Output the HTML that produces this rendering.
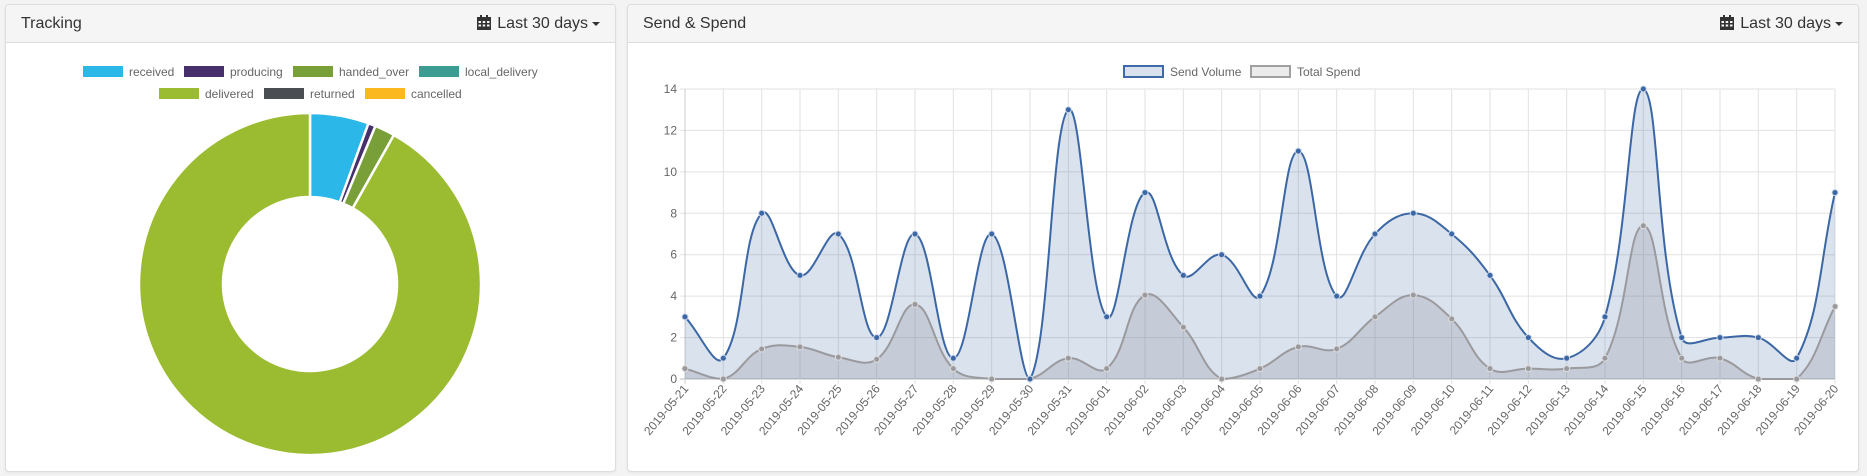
<!DOCTYPE html>
<html><head><meta charset="utf-8">
<style>
html,body{margin:0;padding:0;}
body{width:1867px;height:476px;background:#f3f3f3;font-family:"Liberation Sans",sans-serif;position:relative;overflow:hidden;}
.panel{position:absolute;top:4px;background:#fff;border:1px solid #ddd;border-radius:4px;box-shadow:0 1px 2px rgba(0,0,0,.06);}
.hd{height:37px;background:#f5f5f5;border-bottom:1px solid #ddd;border-radius:4px 4px 0 0;position:relative;}
.hd .t{position:absolute;left:15px;top:10px;font-size:16px;color:#333;}
.hd .r{position:absolute;right:15px;top:10px;font-size:16px;color:#333;}
.caret{display:inline-block;width:0;height:0;border-left:4px solid transparent;border-right:4px solid transparent;border-top:4px solid #333;vertical-align:middle;margin-left:4px;}
svg text{font-family:"Liberation Sans",sans-serif;}
</style></head><body>
<div class="panel" style="left:5px;width:609px;height:466px;">
 <div class="hd"><span class="t">Tracking</span><span class="r"><svg width="14" height="15" viewBox="0 0 14 15" style="vertical-align:-2px;margin-right:6px"><rect x="0" y="2" width="14" height="13" fill="#333"/><rect x="3" y="0" width="2" height="4" fill="#333"/><rect x="9" y="0" width="2" height="4" fill="#333"/><g fill="#f5f5f5"><rect x="1.5" y="6" width="2.5" height="2"/><rect x="5.7" y="6" width="2.5" height="2"/><rect x="10" y="6" width="2.5" height="2"/><rect x="1.5" y="9.5" width="2.5" height="2"/><rect x="5.7" y="9.5" width="2.5" height="2"/><rect x="10" y="9.5" width="2.5" height="2"/></g></svg>Last 30 days<span class="caret"></span></span></div>
</div>
<div class="panel" style="left:627px;width:1230px;height:466px;">
 <div class="hd"><span class="t">Send &amp; Spend</span><span class="r"><svg width="14" height="15" viewBox="0 0 14 15" style="vertical-align:-2px;margin-right:6px"><rect x="0" y="2" width="14" height="13" fill="#333"/><rect x="3" y="0" width="2" height="4" fill="#333"/><rect x="9" y="0" width="2" height="4" fill="#333"/><g fill="#f5f5f5"><rect x="1.5" y="6" width="2.5" height="2"/><rect x="5.7" y="6" width="2.5" height="2"/><rect x="10" y="6" width="2.5" height="2"/><rect x="1.5" y="9.5" width="2.5" height="2"/><rect x="5.7" y="9.5" width="2.5" height="2"/><rect x="10" y="9.5" width="2.5" height="2"/></g></svg>Last 30 days<span class="caret"></span></span></div>
</div>
<svg id="s" width="1867" height="476" style="position:absolute;left:0;top:0">
 <g font-size="12" fill="#666">
  <rect x="83" y="66" width="40" height="11" fill="#2bb8e8"/><text x="129" y="76">received</text>
  <rect x="184" y="66" width="40" height="11" fill="#46306c"/><text x="230" y="76">producing</text>
  <rect x="293" y="66" width="40" height="11" fill="#789f38"/><text x="339" y="76">handed_over</text>
  <rect x="419" y="66" width="40" height="11" fill="#3b9c92"/><text x="465" y="76">local_delivery</text>
  <rect x="159" y="88" width="40" height="11" fill="#9bbb30"/><text x="205" y="98">delivered</text>
  <rect x="264" y="88" width="40" height="11" fill="#4a4d52"/><text x="310" y="98">returned</text>
  <rect x="365" y="88" width="40" height="11" fill="#fbb91f"/><text x="411" y="98">cancelled</text>
  <rect x="1124" y="66" width="39" height="11" fill="#d9e1ec" stroke="#3e6aa7" stroke-width="2"/><text x="1170" y="76">Send Volume</text>
  <rect x="1251" y="66" width="39" height="11" fill="#ececec" stroke="#a0a0a0" stroke-width="2"/><text x="1297" y="76">Total Spend</text>
 </g>
 <g id="donut"></g>
 <g id="chart"></g>
</svg>
<script>
var NS="http://www.w3.org/2000/svg";
function el(p,t,a,txt){var e=document.createElementNS(NS,t);for(var k in a)e.setAttribute(k,a[k]);if(txt!=null)e.textContent=txt;p.appendChild(e);return e;}
var cx=310,cy=284,R=171,r=87,d=document.getElementById('donut');
var segs=[[0,20,'#2bb8e8'],[20,22.5,'#46306c'],[22.5,29.4,'#789f38'],[29.4,360,'#9bbb30']];
function pt(a,rad){var t=(a-90)*Math.PI/180;return [cx+rad*Math.cos(t),cy+rad*Math.sin(t)];}
segs.forEach(function(s){var a0=s[0],a1=s[1],lg=(a1-a0)>180?1:0;var p0=pt(a0,R),p1=pt(a1,R),q1=pt(a1,r),q0=pt(a0,r);
el(d,'path',{d:'M'+p0+' A'+R+' '+R+' 0 '+lg+' 1 '+p1+' L'+q1+' A'+r+' '+r+' 0 '+lg+' 0 '+q0+' Z',fill:s[2],stroke:'#fff','stroke-width':2.5});});
var g=document.getElementById('chart');
var X0=685,X1=1835,Y0=379,Y14=89,n=31,step=(X1-X0)/30;
function Y(v){return Y0-(Y0-Y14)*v/14;}
for(var v=0;v<=14;v+=2){var y=Y(v);el(g,'line',{x1:X0-5,x2:X1,y1:y,y2:y,stroke:v==0?'#bbb':'#e2e2e2','stroke-width':1});el(g,'text',{x:X0-8,y:y+4,'text-anchor':'end','font-size':12,fill:'#666'},v);}
var labels=[];for(var i=21;i<=31;i++)labels.push('2019-05-'+i);for(var i=1;i<=20;i++)labels.push('2019-06-'+(i<10?'0'+i:i));
for(var i=0;i<n;i++){var x=X0+i*step;el(g,'line',{x1:x,x2:x,y1:Y14,y2:Y0+5,stroke:i==0?'#ccc':'#e2e2e2'});
el(g,'text',{x:0,y:0,'text-anchor':'end','font-size':12,fill:'#666',transform:'translate('+(x+4)+','+(Y0+10)+') rotate(-50)'},labels[i]);}
var send=[3,1,8,5,7,2,7,1,7,0,13,3,9,5,6,4,11,4,7,8,7,5,2,1,3,14,2,2,2,1,9];
var spend=[0.5,0,1.45,1.55,1.05,0.95,3.6,0.5,0,0,1,0.5,4.05,2.5,0,0.5,1.55,1.45,3,4.05,2.9,0.5,0.5,0.5,1,7.4,1,1,0,0,3.5];
function curve(data){var P=data.map(function(v,i){return [X0+i*step,Y(v)];});var C=[];var t=0.4;
for(var i=0;i<n;i++){var pv=P[Math.max(0,i-1)],c=P[i],nx=P[Math.min(n-1,i+1)];
var d01=Math.hypot(c[0]-pv[0],c[1]-pv[1]),d12=Math.hypot(nx[0]-c[0],nx[1]-c[1]);var s01=d01/(d01+d12||1),s12=d12/(d01+d12||1);
var fa=t*s01,fb=t*s12;var cl=function(y){return Math.max(Y14,Math.min(Y0,y));};
C.push([[c[0]-fa*(nx[0]-pv[0]),cl(c[1]-fa*(nx[1]-pv[1]))],[c[0]+fb*(nx[0]-pv[0]),cl(c[1]+fb*(nx[1]-pv[1]))]]);}
var s='M'+P[0];for(var i=1;i<n;i++){s+=' C'+C[i-1][1]+' '+C[i][0]+' '+P[i];}return {d:s,P:P};}
var a=curve(send),b=curve(spend);
el(g,'path',{d:a.d+' L'+X1+','+Y0+' L'+X0+','+Y0+' Z',fill:'rgba(60,100,160,0.19)'});
el(g,'path',{d:b.d+' L'+X1+','+Y0+' L'+X0+','+Y0+' Z',fill:'rgba(120,120,130,0.2)'});
el(g,'path',{d:b.d,fill:'none',stroke:'#9a9a9e','stroke-width':2});
el(g,'path',{d:a.d,fill:'none',stroke:'#3b67a5','stroke-width':2});
b.P.forEach(function(p){el(g,'circle',{cx:p[0],cy:p[1],r:3,fill:'#9a9a9e',stroke:'#ddd','stroke-width':1});});
a.P.forEach(function(p){el(g,'circle',{cx:p[0],cy:p[1],r:3,fill:'#3b67a5',stroke:'#cdd8ea','stroke-width':1});});
</script>
</body></html>
